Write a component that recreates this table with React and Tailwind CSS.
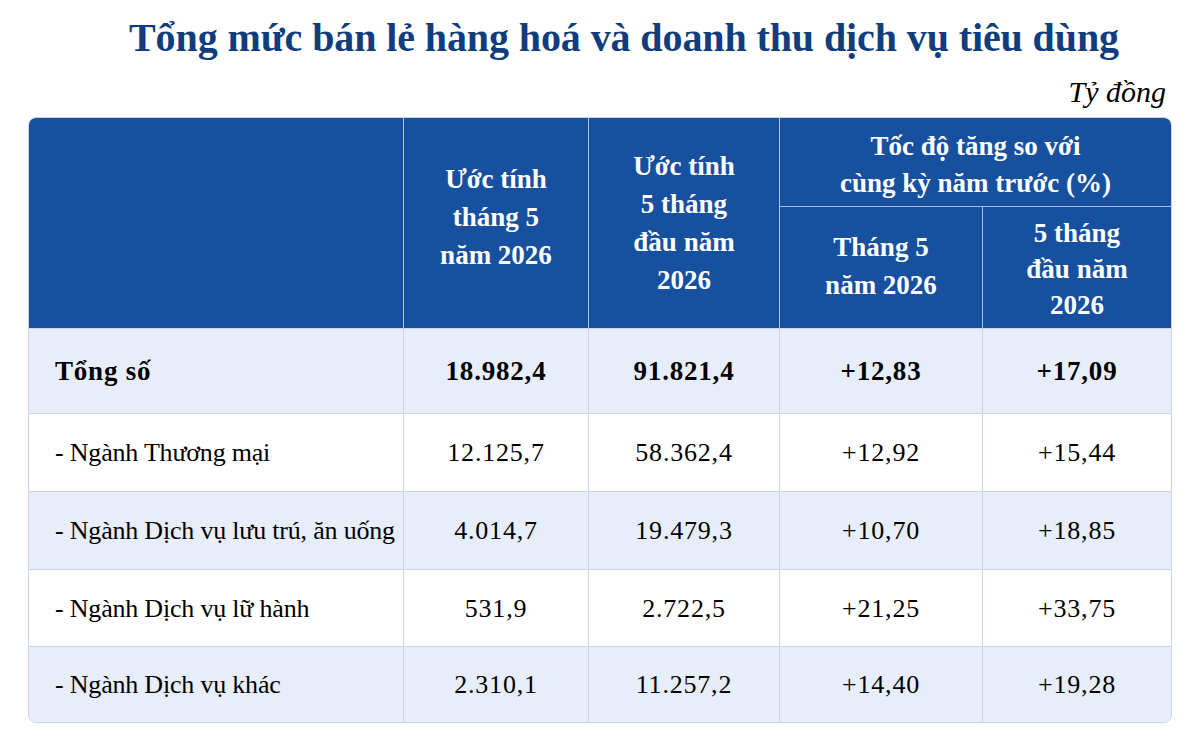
import React from "react";

const rows = [
  { label: "Tổng số", v: ["18.982,4", "91.821,4", "+12,83", "+17,09"], bold: true, bg: "bg-[#e7eef9]", h: "h-[85px]" },
  { label: "- Ngành Thương mại", v: ["12.125,7", "58.362,4", "+12,92", "+15,44"], bg: "bg-white", h: "h-[78px]" },
  { label: "- Ngành Dịch vụ lưu trú, ăn uống", v: ["4.014,7", "19.479,3", "+10,70", "+18,85"], bg: "bg-[#e7eef9]", h: "h-[78px]" },
  { label: "- Ngành Dịch vụ lữ hành", v: ["531,9", "2.722,5", "+21,25", "+33,75"], bg: "bg-white", h: "h-[77px]" },
  { label: "- Ngành Dịch vụ khác", v: ["2.310,1", "11.257,2", "+14,40", "+19,28"], bg: "bg-[#e7eef9]", h: "h-[76px]" },
];

export default function App() {
  return (
    <div className="w-[1200px] h-[737px] bg-white font-['Liberation_Serif','Times_New_Roman',serif] text-black overflow-hidden">
      <h1 className="pt-[12px] pl-[48px] text-center text-[40px] leading-[52px] font-bold text-[#0f3d7d] tracking-[-0.1px]">
        Tổng mức bán lẻ hàng hoá và doanh thu dịch vụ tiêu dùng
      </h1>
      <div className="pr-[34px] text-right italic text-[30px] leading-[36px] mt-[10px]">Tỷ đồng</div>
      <div className="mx-[28px] mt-[7px] rounded-[8px] overflow-hidden border border-[#c9d3e2]">
        <div className="grid grid-cols-[375px_185px_191px_203px_1fr] bg-[#17509f] text-white font-bold text-[27px] leading-[38px] text-center h-[210px]">
          <div className="border-r border-[#a9bfe0]"></div>
          <div className="border-r border-[#a9bfe0] flex items-center justify-center pb-[12px]">
            <span>Ước tính<br />tháng 5<br />năm 2026</span>
          </div>
          <div className="border-r border-[#a9bfe0] flex items-center justify-center">
            <span>Ước tính<br />5 tháng<br />đầu năm<br />2026</span>
          </div>
          <div className="col-span-2 grid grid-rows-[89px_1fr]">
            <div className="border-b border-[#a9bfe0] flex items-center justify-center pt-[5px]">
              <span className="leading-[37px]">Tốc độ tăng so với<br />cùng kỳ năm trước (%)</span>
            </div>
            <div className="grid grid-cols-[203px_1fr]">
              <div className="border-r border-[#a9bfe0] flex items-center justify-center pb-[4px]">
                <span>Tháng 5<br />năm 2026</span>
              </div>
              <div className="flex items-center justify-center pt-[2px]">
                <span className="leading-[36px]">5 tháng<br />đầu năm<br />2026</span>
              </div>
            </div>
          </div>
        </div>
        {rows.map((r, i) => (
          <div
            key={i}
            className={`grid grid-cols-[375px_185px_191px_203px_1fr] border-t border-[#cdd5e2] ${r.bg} ${r.h} ${r.bold ? "font-bold text-[27px]" : "text-[26px]"}`}
          >
            <div className={`border-r border-[#cdd5e2] flex items-center pl-[26px] whitespace-nowrap ${r.bold ? "tracking-[0.8px]" : "tracking-[-0.2px]"}`}>{r.label}</div>
            {r.v.map((v, j) => (
              <div key={j} className={`flex items-center justify-center tracking-[0.8px] ${j < 3 ? "border-r border-[#cdd5e2]" : ""}`}>
                {v}
              </div>
            ))}
          </div>
        ))}
      </div>
    </div>
  );
}
